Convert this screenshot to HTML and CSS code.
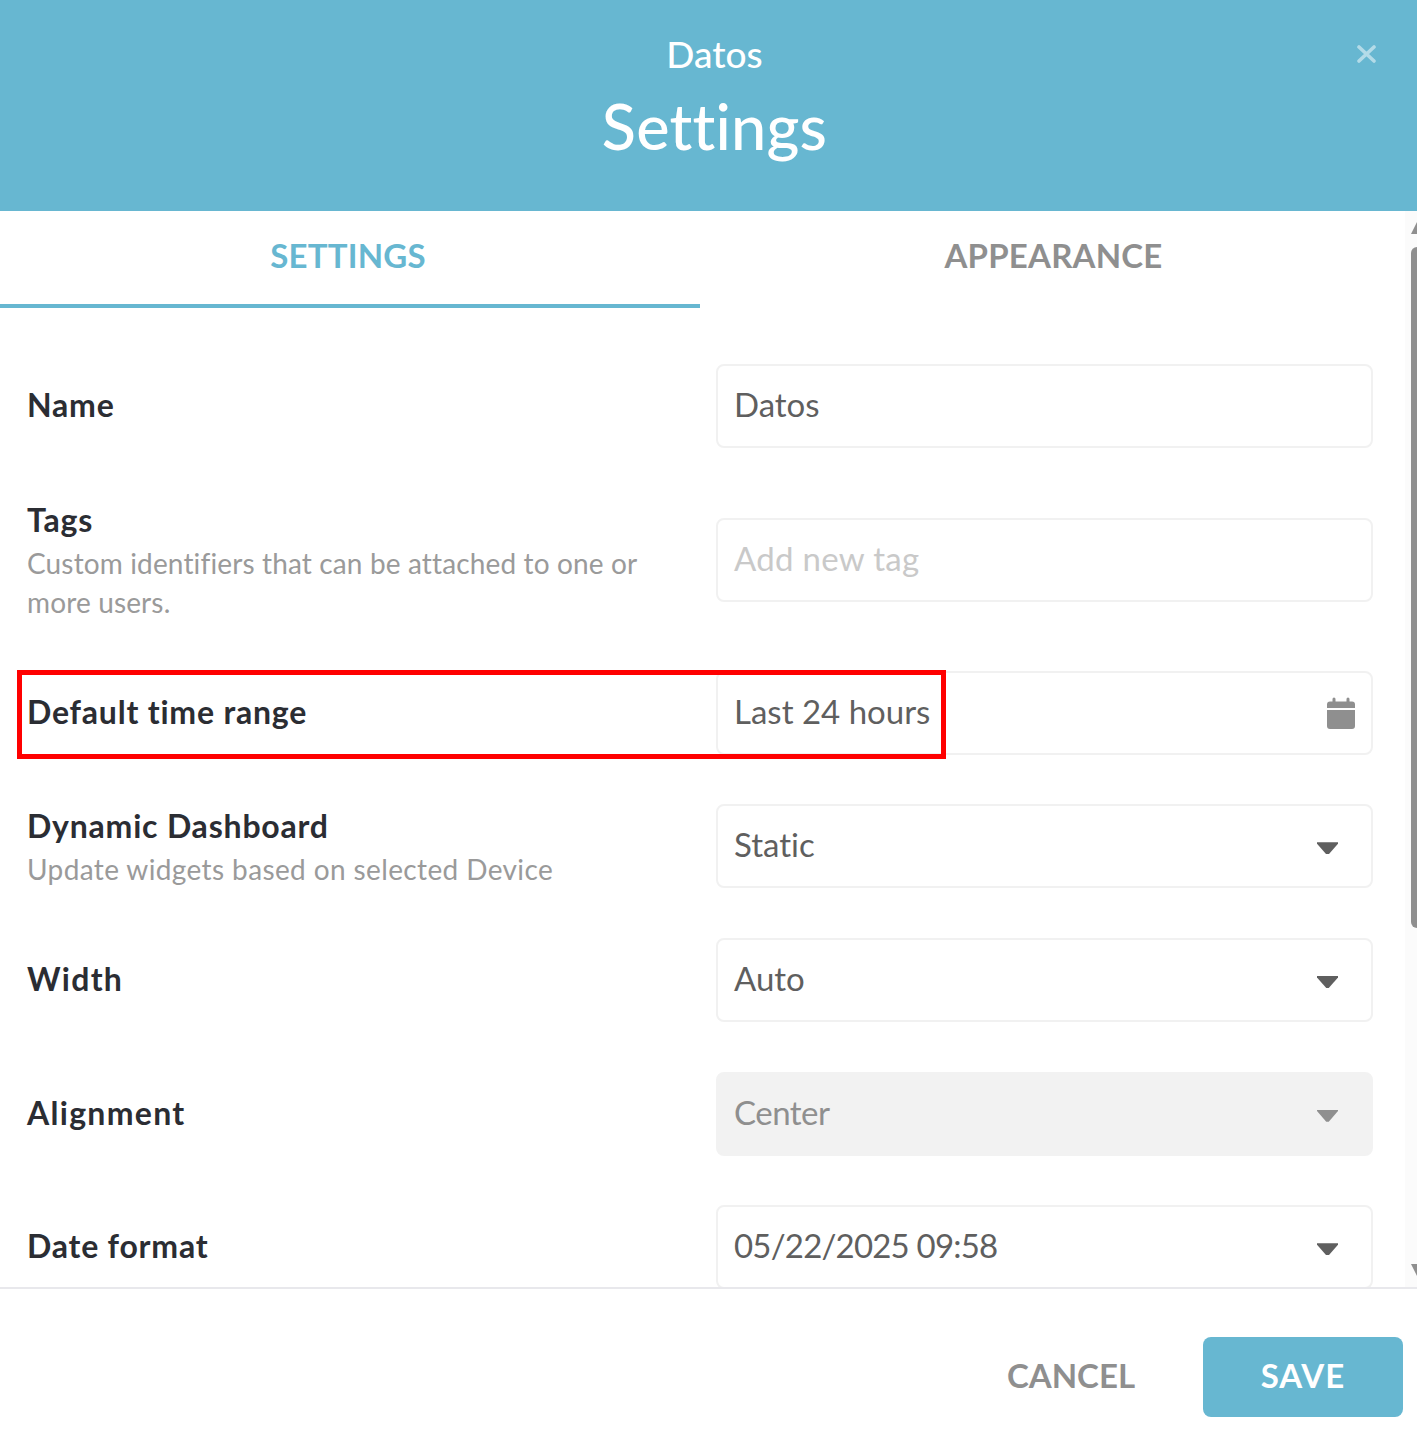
FILE: index.html
```html
<!DOCTYPE html>
<html lang="en">
<head>
    <meta charset="UTF-8">
    <meta name="viewport" content="width=device-width, initial-scale=1.0">
    <title>Settings</title>
    <link rel="stylesheet" href="styles.css">
</head>
<body>

    <div class="modal">
        <div class="modal-header">
            <div class="modal-subtitle">Datos</div>
            <h1 class="modal-title">Settings</h1>
            <svg class="close-icon" width="19" height="18" viewBox="0 0 19 18">
                <path d="M2 2 L17 16 M17 2 L2 16" stroke="#fff" stroke-width="3.6" stroke-linecap="round"/>
            </svg>
        </div>

        <div class="modal-body">
            <div class="scroll-area">
                <div class="tabs">
                    <div class="tab tab-active">SETTINGS</div>
                    <div class="tab tab-second">APPEARANCE</div>
                </div>

                <div class="form">
                    <div class="form-row">
                        <div class="form-label"><div class="label-title">Name</div></div>
                        <div class="field">Datos</div>
                    </div>
                    <div class="form-row">
                        <div class="form-label form-label-help">
                            <div class="label-title">Tags</div>
                            <div class="label-help">Custom identifiers that can be attached to one or more users.</div>
                        </div>
                        <div class="field field-placeholder">Add new tag</div>
                    </div>
                    <div class="form-row">
                        <div class="form-label"><div class="label-title">Default time range</div></div>
                        <div class="field">
                            Last 24 hours
                            <svg class="calendar-icon" width="28" height="32" viewBox="0 0 28 32">
                                <path d="M7 0.5a1.5 1.5 0 0 1 1.5 1.5v2.5h11V2a1.5 1.5 0 0 1 3 0v2.5H25a3 3 0 0 1 3 3V11H0V7.5a3 3 0 0 1 3-3h2.5V2A1.5 1.5 0 0 1 7 0.5z M0 13h28v16a3 3 0 0 1-3 3H3a3 3 0 0 1-3-3z" fill="#8f8f8f"/>
                            </svg>
                        </div>
                    </div>
                    <div class="form-row">
                        <div class="form-label form-label-help">
                            <div class="label-title">Dynamic Dashboard</div>
                            <div class="label-help label-help-wide">Update widgets based on selected Device</div>
                        </div>
                        <div class="field">Static<span class="caret"></span></div>
                    </div>
                    <div class="form-row">
                        <div class="form-label"><div class="label-title label-title-wide">Width</div></div>
                        <div class="field">Auto<span class="caret"></span></div>
                    </div>
                    <div class="form-row">
                        <div class="form-label"><div class="label-title label-title-wide">Alignment</div></div>
                        <div class="field field-disabled">Center<span class="caret"></span></div>
                    </div>
                    <div class="form-row">
                        <div class="form-label"><div class="label-title">Date format</div></div>
                        <div class="field field-date">05/22/2025 09:58<span class="caret"></span></div>
                    </div>
                </div>
            </div>

            <div class="scrollbar">
                <span class="scroll-arrow-up"></span>
                <div class="scroll-thumb"></div>
                <span class="scroll-arrow-down"></span>
            </div>
        </div>

        <div class="modal-footer">
            <button class="btn btn-cancel">CANCEL</button>
            <button class="btn btn-save">SAVE</button>
        </div>

        <div class="highlight-box"></div>
    </div>

</body>
</html>
```

FILE: styles.css
```css
* {
    margin: 0;
    padding: 0;
    box-sizing: border-box;
}

body {
    font-family: "Lato", "Noto Sans", sans-serif;
    font-variant-ligatures: none;
    background: #fff;
    color: #2b2d33;
}

.modal {
    position: relative;
    width: 1417px;
    height: 1448px;
    overflow: hidden;
    display: flex;
    flex-direction: column;
}

.modal-header {
    position: relative;
    height: 211px;
    flex: none;
    background: #67b7d1;
    color: #fff;
    text-align: center;
    padding: 31px 0 0 12px;
}

.modal-subtitle {
    font-size: 37px;
    font-weight: 500;
    line-height: 46px;
}

.modal-title {
    font-size: 63px;
    font-weight: 500;
    line-height: 78px;
    letter-spacing: 0.2px;
    margin-top: 10px;
}

.close-icon {
    position: absolute;
    top: 45px;
    right: 41px;
    opacity: 0.5;
}

.modal-body {
    flex: 1;
    min-height: 0;
    display: flex;
}

.scroll-area {
    flex: 1;
    min-width: 0;
    overflow: hidden;
}

.tabs {
    display: flex;
    height: 97px;
}

.tab {
    width: 700px;
    height: 97px;
    padding-top: 23px;
    font-size: 33px;
    font-weight: 700;
    line-height: 42px;
    letter-spacing: 0.2px;
    text-align: center;
    color: #8f8f8f;
}

.tab-active {
    padding-right: 4px;
    color: #67b7d1;
    border-bottom: 4px solid #67b7d1;
}

.tab-second {
    padding-left: 7px;
}

.form {
    padding: 56.45px 32px 0 27px;
}

.form-row {
    display: grid;
    grid-template-columns: 689px 657px;
    align-items: center;
    margin-bottom: 49.65px;
}

.form-label {
    padding-right: 30px;
    padding-bottom: 2px;
}

/* the text block sits a little below the middle of its field */
.form-label-help {
    padding-top: 2px;
    padding-bottom: 0;
    margin-bottom: -1px;
}

.label-title {
    font-size: 32px;
    font-weight: 700;
    line-height: 40px;
    letter-spacing: 0.8px;
}

.label-title-wide {
    letter-spacing: 1.3px;
}

.label-help {
    margin-top: 4px;
    font-size: 28px;
    line-height: 39px;
    letter-spacing: 0.14px;
    color: #9a9a9a;
}

.label-help-wide {
    letter-spacing: 0.38px;
}

.field {
    position: relative;
    height: 84px;
    padding: 0 16px;
    border: 2px solid #f1f1f1;
    border-radius: 8px;
    font-size: 33px;
    line-height: 76px;
    color: #5f5f5f;
}

.field-placeholder {
    color: #c9c9c9;
    letter-spacing: 0.3px;
}

.field-disabled {
    background: #f2f2f2;
    border-color: #f2f2f2;
    color: #8f8f8f;
    letter-spacing: -0.5px;
}

.field-date {
    letter-spacing: -0.8px;
}

.calendar-icon {
    position: absolute;
    top: 24px;
    right: 16px;
}

.caret {
    position: absolute;
    top: 36px;
    right: 33px;
    width: 21px;
    height: 12px;
    background: #5f5f5f;
    clip-path: polygon(0 0, 100% 0, 100% 12%, 56% 100%, 44% 100%, 0 12%);
}

.field-disabled .caret {
    background: #8f8f8f;
}

.scrollbar {
    flex: none;
    width: 12px;
    padding-left: 6px;
    background: #fbfbfb;
    display: flex;
    flex-direction: column;
}

.scroll-arrow-up,
.scroll-arrow-down {
    display: block;
    width: 12px;
    height: 12px;
    background: #8f8f8f;
    flex: none;
}

.scroll-arrow-up {
    margin-top: 11px;
    clip-path: polygon(50% 0, 100% 100%, 0 100%);
}

.scroll-arrow-down {
    margin-top: 336px;
    clip-path: polygon(0 0, 100% 0, 50% 100%);
}

.scroll-thumb {
    width: 12px;
    height: 681px;
    margin-top: 13px;
    background: #8f8f8f;
    border-radius: 6px;
}

.modal-footer {
    flex: none;
    height: 161px;
    border-top: 2px solid #e8e8ec;
    padding: 48px 14px 0 0;
    display: flex;
    justify-content: flex-end;
    align-items: flex-start;
}

.btn {
    height: 80px;
    border: none;
    background: none;
    font-family: inherit;
    font-variant-ligatures: none;
    font-size: 33px;
    font-weight: 700;
    line-height: 76px;
    padding-bottom: 4px;
    border-radius: 8px;
    cursor: pointer;
}

.btn-cancel {
    width: 200px;
    margin-right: 32px;
    color: #8f8f8f;
}

.btn-save {
    width: 200px;
    background: #67b7d1;
    color: #fff;
    letter-spacing: 1px;
}

/* red annotation drawn over the time range row */
.highlight-box {
    position: absolute;
    top: 670px;
    left: 17px;
    width: 929px;
    height: 89px;
    border: 5px solid #ff0000;
}
```
